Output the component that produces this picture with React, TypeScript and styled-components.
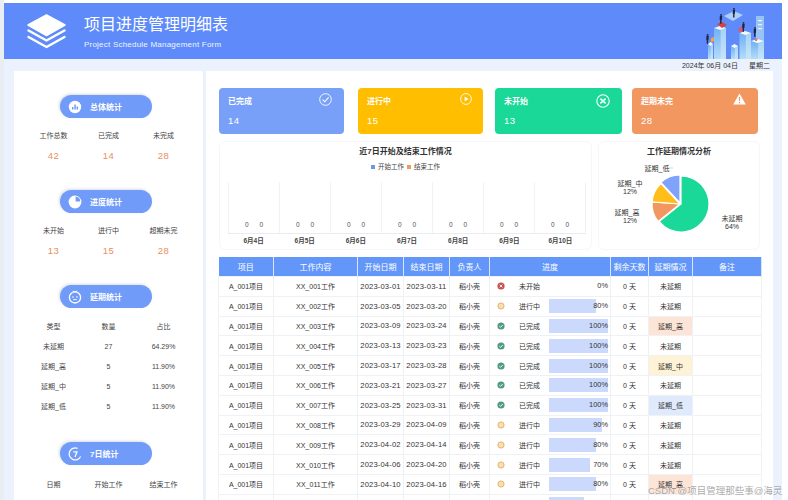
import styled, { createGlobalStyle } from 'styled-components';

// Types
type Task = {
  no: string;
  start: string;
  end: string;
  status: '未开始' | '进行中' | '已完成';
  progress: number;
  delay: string;
};

// Mock data
const tasks: Task[] = [
  { no: '001', start: '2023-03-01', end: '2023-03-11', status: '未开始', progress: 0, delay: '未延期' },
  { no: '002', start: '2023-03-05', end: '2023-03-20', status: '进行中', progress: 80, delay: '未延期' },
  { no: '003', start: '2023-03-09', end: '2023-03-24', status: '已完成', progress: 100, delay: '延期_高' },
  { no: '004', start: '2023-03-13', end: '2023-03-23', status: '已完成', progress: 100, delay: '未延期' },
  { no: '005', start: '2023-03-17', end: '2023-03-28', status: '已完成', progress: 100, delay: '延期_中' },
  { no: '006', start: '2023-03-21', end: '2023-03-27', status: '已完成', progress: 100, delay: '未延期' },
  { no: '007', start: '2023-03-25', end: '2023-03-31', status: '已完成', progress: 100, delay: '延期_低' },
  { no: '008', start: '2023-03-29', end: '2023-04-09', status: '进行中', progress: 90, delay: '未延期' },
  { no: '009', start: '2023-04-02', end: '2023-04-14', status: '进行中', progress: 80, delay: '未延期' },
  { no: '010', start: '2023-04-06', end: '2023-04-20', status: '进行中', progress: 70, delay: '未延期' },
  { no: '011', start: '2023-04-10', end: '2023-04-16', status: '进行中', progress: 80, delay: '延期_高' },
  { no: '012', start: '2023-04-14', end: '2023-04-22', status: '进行中', progress: 60, delay: '未延期' },
];

const columns: [string, number][] = [
  ['项目', 55],
  ['工作内容', 84],
  ['开始日期', 46],
  ['结束日期', 46],
  ['负责人', 40],
  ['进度', 121],
  ['剩余天数', 38],
  ['延期情况', 44],
  ['备注', 69],
];

const days = ['6月4日', '6月5日', '6月6日', '6月7日', '6月8日', '6月9日', '6月10日'];

const delayColors: Record<string, string> = {
  延期_高: '#fce4d6',
  延期_中: '#fff3d7',
  延期_低: '#e0eafd',
};

const GlobalStyle = createGlobalStyle`
  html, body {
    margin: 0;
    padding: 0;
    background: #ffffff;
    overflow: hidden;
    font-family: "Liberation Sans", "Noto Sans CJK SC", sans-serif;
  }
`;

const Page = styled.div`
  position: relative;
  width: 788px;
  height: 500px;
  overflow: hidden;
  box-sizing: border-box;
  padding: 3px 6px 0 4px;
  background: linear-gradient(to right, #e9edf4 4px, #ffffff 4px);
`;

const Sheet = styled.div`
  height: 497px;
  background: #ebf1fd;
`;

const Header = styled.header`
  height: 56px;
  background: #5e8bf9;
  display: flex;
  align-items: center;
  padding: 0 18px 0 23px;
  color: #fff;
`;

const HeaderText = styled.div`
  margin-left: 18px;
  flex: 1;
`;

const Title = styled.h1`
  margin: 1px 0 0;
  font-size: 16px;
  line-height: 22px;
  font-weight: 400;
`;

const Subtitle = styled.div`
  margin-top: 4px;
  font-size: 8px;
  line-height: 10px;
  letter-spacing: 0.22px;
  color: #eef3ff;
`;

const Illustration = styled.svg`
  align-self: flex-end;
`;

const DateBar = styled.div`
  height: 12px;
  display: flex;
  justify-content: flex-end;
  gap: 11px;
  padding-right: 12px;
  font-size: 7px;
  line-height: 13px;
  color: #333;
`;

const Main = styled.div`
  display: flex;
  gap: 3px;
  padding-left: 10px;
`;

const Sidebar = styled.aside`
  width: 189px;
  height: 429px;
  box-sizing: border-box;
  background: #fff;
  padding-top: 24px;
`;

const Section = styled.section<{ $after?: number }>`
  margin-bottom: ${p => p.$after ?? 25}px;
`;

const Pill = styled.div<{ $after?: number }>`
  width: 92px;
  height: 23px;
  margin: 0 0 ${p => p.$after ?? 7}px 46px;
  border-radius: 12px;
  background: #719bf8;
  box-shadow: -1px -1px 3px rgba(120, 130, 160, 0.28);
  display: flex;
  align-items: center;
  gap: 8px;
  padding-left: 8px;
  box-sizing: border-box;
  color: #fff;
  font-size: 8px;
  font-weight: 700;
`;

const StatRow = styled.div`
  display: grid;
  grid-template-columns: repeat(3, 55px);
  padding-left: 12px;
  height: 20px;
  align-items: center;
  text-align: center;
  font-size: 7px;
  color: #444;
`;

const StatValue = styled.span`
  color: #e8905c;
  font-size: 9.5px;
  letter-spacing: 0.4px;
`;

const Content = styled.main`
  width: 567px;
  height: 429px;
  box-sizing: border-box;
  background: #fff;
  padding: 17px 0 0 12px;
`;

const Cards = styled.div`
  display: flex;
  margin-left: 1px;
`;

const Card = styled.div<{ $bg: string; $width: number; $gap: number }>`
  position: relative;
  width: ${p => p.$width}px;
  margin-right: ${p => p.$gap}px;
  height: 46px;
  box-sizing: border-box;
  padding: 8px 9px;
  border-radius: 4px;
  background: ${p => p.$bg};
  color: #fff;
`;

const CardLabel = styled.div`
  font-size: 8px;
  line-height: 11px;
  font-weight: 700;
`;

const CardValue = styled.div`
  margin-top: 8px;
  font-size: 9.5px;
  line-height: 12px;
  letter-spacing: 0.5px;
`;

const CardIcon = styled.svg<{ $right: number; $top: number }>`
  position: absolute;
  right: ${p => p.$right}px;
  top: ${p => p.$top}px;
`;

const ChartRow = styled.div`
  display: flex;
  gap: 6px;
  margin: 7px 0 7px 1px;
`;

const ChartBox = styled.div<{ $width: number }>`
  width: ${p => p.$width}px;
  height: 109px;
  box-sizing: border-box;
  border: 1px solid #f6f7fb;
  border-radius: 6px;
  padding-top: 4px;
`;

const ChartTitle = styled.div`
  text-align: center;
  font-size: 8px;
  line-height: 11px;
  font-weight: 700;
  color: #333;
`;

const Legend = styled.div`
  margin-top: 5px;
  display: flex;
  justify-content: center;
  align-items: center;
  gap: 3px;
  font-size: 6.5px;
  line-height: 9px;
  color: #444;
`;

const LegendDot = styled.span<{ $color: string }>`
  display: block;
  flex: none;
  width: 4px;
  height: 4px;
  background: ${p => p.$color};
`;

const Plot = styled.div`
  display: flex;
  margin: 11px 0 0 8px;
  width: 358px;
  height: 52px;
  border-bottom: 1px solid #e9ebef;
  border-right: 1px solid #f1f2f5;
  box-sizing: border-box;
`;

const PlotGroup = styled.div`
  flex: 1;
  border-left: 1px solid #f1f2f5;
  display: flex;
  align-items: flex-end;
  justify-content: center;
  gap: 11px;
  padding-bottom: 4px;
  font-size: 6.5px;
  line-height: 8px;
  color: #555;
`;

const Days = styled.div`
  display: flex;
  margin-left: 8px;
  width: 358px;
`;

const DayLabel = styled.div`
  flex: 1;
  text-align: center;
  font-size: 6.5px;
  line-height: 14px;
  font-weight: 700;
  color: #444;
`;

const Table = styled.table`
  width: 543px;
  table-layout: fixed;
  border-collapse: collapse;
  font-size: 7px;
  color: #333;
`;

const Th = styled.th`
  height: 19px;
  padding: 0;
  background: #6396f9;
  border-right: 1px solid #d9e5fd;
  color: #fff;
  font-size: 8px;
  font-weight: 400;
  white-space: nowrap;
`;

const Td = styled.td<{ $bg?: string }>`
  height: 19.8px;
  padding: 0;
  box-sizing: border-box;
  text-align: center;
  white-space: nowrap;
  border: 1px solid #eff1f5;
  background: ${p => p.$bg ?? 'transparent'};
`;

const DateText = styled.span`
  font-size: 7.6px;
  letter-spacing: 0.15px;
`;

const Progress = styled.div`
  display: grid;
  grid-template-columns: 8px 21px 1fr;
  column-gap: 14px;
  align-items: center;
  padding: 0 2px 0 7px;
  text-align: left;
`;

const BarTrack = styled.div`
  position: relative;
  margin-left: -5px;
  height: 14px;
  font-size: 7.4px;
  line-height: 14px;
  text-align: right;
`;

const BarFill = styled.div`
  position: absolute;
  left: 0;
  top: 0;
  bottom: 0;
  background: #cbdafc;
`;

const BarText = styled.span`
  position: relative;
`;

const Watermark = styled.div`
  position: absolute;
  left: 648px;
  top: 484px;
  font-size: 9.5px;
  line-height: 13px;
  color: rgba(110, 110, 110, 0.6);
  text-shadow: 0 0 1px rgba(255, 255, 255, 0.8);
  white-space: nowrap;
`;

const LayersLogo = () => (
  <svg width="39" height="35" viewBox="0 0 39 35" fill="none">
    <path d="M19.5 1 L38 11 L19.5 21.5 L1 11 Z" fill="#fff" stroke="#fff" strokeWidth="1.5" strokeLinejoin="round" />
    <path d="M1.5 16.5 L19.5 26.5 L37.5 16.5" stroke="#fff" strokeWidth="2.4" strokeLinecap="round" strokeLinejoin="round" />
    <path d="M1.5 23 L19.5 33 L37.5 23" stroke="#fff" strokeWidth="2.4" strokeLinecap="round" strokeLinejoin="round" />
  </svg>
);

const Column = ({ x, y, w, h }: { x: number; y: number; w: number; h: number }) => (
  <g>
    <rect x={x} y={y} width={w} height={h} fill="url(#col)" />
    <rect x={x + w * 0.55} y={y} width={w * 0.45} height={h} fill="#d6ecfb" opacity="0.55" />
    <path d={`M${x} ${y} L${x + w / 2} ${y - 2} L${x + w} ${y} L${x + w / 2} ${y + 2} Z`} fill="#f2f9fe" />
  </g>
);

const Figure = ({ x, y }: { x: number; y: number }) => (
  <g>
    <circle cx={x} cy={y} r="1" fill="#2a2f4a" />
    <path d={`M${x - 1.2} ${y + 1.1} h2.4 l-0.3 4 h-0.4 v3.6 h-1.4 v-3.6 h-0.4 Z`} fill="#1c2647" />
  </g>
);

const BuildingArt = () => (
  <Illustration width="62" height="51" viewBox="0 0 62 51">
    <defs>
      <linearGradient id="col" x1="0" y1="0" x2="0" y2="1">
        <stop offset="0" stopColor="#6fb0f2" />
        <stop offset="1" stopColor="#b5dcf8" />
      </linearGradient>
    </defs>
    <path d="M22 8 L32 3 L41 7 L31 13 Z" fill="#c4dffa" opacity="0.8" />
    <rect x="54" y="8" width="8" height="29" fill="#a5cdf5" opacity="0.85" />
    <rect x="56" y="12" width="4" height="1.2" fill="#e4f2fd" />
    <rect x="56" y="16" width="4" height="1.2" fill="#e4f2fd" />
    <rect x="56" y="20" width="4" height="1.2" fill="#e4f2fd" />
    <Column x={12} y={20} w={12} h={31} />
    <Column x={29} y={38} w={7} h={13} />
    <Column x={37.5} y={25} w={11.5} h={26} />
    <Column x={49} y={33} w={13} h={18} />
    <Column x={6} y={36} w={5} h={15} />
    <path d="M15 16 L20 14 L25 17 L20 20 Z" fill="#dc3f3f" />
    <path d="M36 21 L41 18 L42 22 L38 25 Z" fill="#e0566a" />
    <path d="M9 30 L12 29 L12 33 L9 35 Z" fill="#f6a13b" />
    <path d="M53 31 L56 30 L55 33 L53 33 Z" fill="#ef7a4e" />
    <Figure x={32} y={0.9} />
    <Figure x={19} y={7} />
    <Figure x={41.5} y={15} />
    <Figure x={53} y={20} />
    <Figure x={5.6} y={27} />
  </Illustration>
);

const PillCircle = ({ children }: { children: React.ReactNode }) => (
  <svg width="14" height="14" viewBox="0 0 14 14">
    {children}
  </svg>
);

const statusIcon = (status: Task['status']) => {
  if (status === '未开始') {
    return (
      <svg width="8" height="8" viewBox="0 0 8 8">
        <circle cx="4" cy="4" r="3.6" fill="#c8504e" />
        <path d="M2.6 2.6 L5.4 5.4 M5.4 2.6 L2.6 5.4" stroke="#fff" strokeWidth="0.9" />
      </svg>
    );
  }
  if (status === '进行中') {
    return (
      <svg width="8" height="8" viewBox="0 0 8 8">
        <circle cx="4" cy="4" r="3.1" fill="#f6dfb4" stroke="#e8b36a" strokeWidth="1" />
      </svg>
    );
  }
  return (
    <svg width="8" height="8" viewBox="0 0 8 8">
      <circle cx="4" cy="4" r="3.6" fill="#4f9a82" />
      <path d="M2.3 4.1 L3.6 5.3 L5.8 2.9" stroke="#fff" strokeWidth="0.9" fill="none" />
    </svg>
  );
};

// Pie slice from angle a to b, degrees clockwise from the top
const slice = (cx: number, cy: number, r: number, a: number, b: number) => {
  const pt = (d: number) => {
    const t = (d * Math.PI) / 180;
    return `${(cx + r * Math.sin(t)).toFixed(2)} ${(cy - r * Math.cos(t)).toFixed(2)}`;
  };
  return `M${cx} ${cy} L${pt(a)} A${r} ${r} 0 ${b - a > 180 ? 1 : 0} 1 ${pt(b)} Z`;
};

const PieText = styled.text`
  font-size: 7px;
  fill: #333;
  text-anchor: middle;
`;

const PieSvg = styled.svg`
  display: block;
`;

const PieChart = () => (
  <PieSvg width="160" height="92" viewBox="0 0 160 92">
    <path d={slice(82, 47, 28, 0, 231.4)} fill="#19d898" stroke="#fff" strokeWidth="1.2" />
    <path d={slice(81, 47, 28, 231.4, 274.2)} fill="#f2975f" stroke="#fff" strokeWidth="1.2" />
    <path d={slice(81, 47, 28, 274.2, 317)} fill="#ffbe1a" stroke="#fff" strokeWidth="1.2" />
    <path d={slice(81, 46, 28, 317, 360)} fill="#7fa3fa" stroke="#fff" strokeWidth="1.2" />
    <path d="M69 11 L74 11" stroke="#aaa" strokeWidth="0.5" />
    <PieText x="58" y="14">延期_低</PieText>
    <PieText x="31" y="29">延期_中</PieText>
    <PieText x="31" y="37">12%</PieText>
    <PieText x="28" y="58">延期_高</PieText>
    <PieText x="31" y="66">12%</PieText>
    <PieText x="133" y="64">未延期</PieText>
    <PieText x="133" y="72">64%</PieText>
  </PieSvg>
);

const App = () => {
  return (
    <>
      <GlobalStyle />
      <Page>
        <Sheet>
          <Header>
            <LayersLogo />
            <HeaderText>
              <Title>项目进度管理明细表</Title>
              <Subtitle>Project Schedule Management Form</Subtitle>
            </HeaderText>
            <BuildingArt />
          </Header>
          <DateBar>
            <span>2024年 06月 04日</span>
            <span>星期二</span>
          </DateBar>
          <Main>
            <Sidebar>
              <Section>
                <Pill>
                  <PillCircle>
                    <circle cx="7" cy="7" r="6.2" fill="#fff" />
                    <path d="M4 9.5 V7 H5.5 V9.5 Z M6.3 9.5 V4.6 H7.8 V9.5 Z M8.6 9.5 V6.4 H10.1 V9.5 Z" fill="#719bf8" />
                  </PillCircle>
                  总体统计
                </Pill>
                <StatRow><span>工作总数</span><span>已完成</span><span>未完成</span></StatRow>
                <StatRow><StatValue>42</StatValue><StatValue>14</StatValue><StatValue>28</StatValue></StatRow>
              </Section>
              <Section>
                <Pill>
                  <PillCircle>
                    <circle cx="7" cy="7" r="6.4" fill="#fff" />
                    <path d="M7.6 1.6 A5 5 0 0 1 12.2 6.4 H7.6 Z" fill="#719bf8" />
                  </PillCircle>
                  进度统计
                </Pill>
                <StatRow><span>未开始</span><span>进行中</span><span>超期未完</span></StatRow>
                <StatRow><StatValue>13</StatValue><StatValue>15</StatValue><StatValue>28</StatValue></StatRow>
              </Section>
              <Section $after={26}>
                <Pill $after={8}>
                  <PillCircle>
                    <circle cx="7" cy="7.4" r="5.6" fill="none" stroke="#fff" strokeWidth="1.3" />
                    <path d="M4.8 1 L7 2.2 L9.2 1" fill="none" stroke="#fff" strokeWidth="1" />
                    <circle cx="5" cy="7" r="0.8" fill="#fff" />
                    <circle cx="9" cy="7" r="0.8" fill="#fff" />
                    <path d="M5.2 9.6 H8.8" stroke="#fff" strokeWidth="0.9" />
                  </PillCircle>
                  延期统计
                </Pill>
                <StatRow><span>类型</span><span>数量</span><span>占比</span></StatRow>
                <StatRow><span>未延期</span><span>27</span><span>64.29%</span></StatRow>
                <StatRow><span>延期_高</span><span>5</span><span>11.90%</span></StatRow>
                <StatRow><span>延期_中</span><span>5</span><span>11.90%</span></StatRow>
                <StatRow><span>延期_低</span><span>5</span><span>11.90%</span></StatRow>
              </Section>
              <Section>
                <Pill $after={9}>
                  <PillCircle>
                    <path d="M9.5 1.4 A6 6 0 1 0 12.6 9.6" fill="none" stroke="#fff" strokeWidth="1.2" />
                    <path d="M5.4 4.8 H9 L7 10" fill="none" stroke="#fff" strokeWidth="1.2" />
                  </PillCircle>
                  7日统计
                </Pill>
                <StatRow><span>日期</span><span>开始工作</span><span>结束工作</span></StatRow>
              </Section>
            </Sidebar>
            <Content>
              <Cards>
                <Card $bg="#78a0f9" $width={125} $gap={14}>
                  <CardLabel>已完成</CardLabel>
                  <CardValue>14</CardValue>
                  <CardIcon $right={12} $top={5} width="13" height="13" viewBox="0 0 13 13" fill="none">
                    <circle cx="6.5" cy="6.5" r="5.8" stroke="#fff" strokeWidth="0.9" />
                    <path d="M3.6 6.6 L5.8 8.8 L9.6 4.4" stroke="#fff" strokeWidth="1.1" />
                  </CardIcon>
                </Card>
                <Card $bg="#ffbe00" $width={125} $gap={12}>
                  <CardLabel>进行中</CardLabel>
                  <CardValue>15</CardValue>
                  <CardIcon $right={11} $top={5} width="12" height="12" viewBox="0 0 12 12" fill="none">
                    <circle cx="6" cy="6" r="5.4" stroke="#fff" strokeWidth="0.9" />
                    <path d="M4.6 3.4 L8.6 6 L4.6 8.6 Z" fill="#fff" />
                  </CardIcon>
                </Card>
                <Card $bg="#19d898" $width={127} $gap={10}>
                  <CardLabel>未开始</CardLabel>
                  <CardValue>13</CardValue>
                  <CardIcon $right={12} $top={6} width="14" height="14" viewBox="0 0 14 14" fill="none">
                    <circle cx="7" cy="7" r="6.2" stroke="#fff" strokeWidth="1.1" />
                    <path d="M4.4 4.6 L9.6 9.4 M9.6 4.6 L4.4 9.4" stroke="#fff" strokeWidth="1.5" />
                  </CardIcon>
                </Card>
                <Card $bg="#f2975f" $width={126} $gap={0}>
                  <CardLabel>超期未完</CardLabel>
                  <CardValue>28</CardValue>
                  <CardIcon $right={12} $top={5} width="13" height="12" viewBox="0 0 13 12">
                    <path d="M6.5 0.5 L12.8 11.5 H0.2 Z" fill="#fff" />
                    <path d="M6.5 4 V8 M6.5 9 V10.2" stroke="#f2975f" strokeWidth="1.2" />
                  </CardIcon>
                </Card>
              </Cards>
              <ChartRow>
                <ChartBox $width={373}>
                  <ChartTitle>近7日开始及结束工作情况</ChartTitle>
                  <Legend>
                    <LegendDot $color="#6f97e8" />
                    开始工作
                    <LegendDot $color="#eb9a68" />
                    结束工作
                  </Legend>
                  <Plot>
                    {days.map(day => (
                      <PlotGroup key={day}>
                        <span>0</span>
                        <span>0</span>
                      </PlotGroup>
                    ))}
                  </Plot>
                  <Days>
                    {days.map(day => (
                      <DayLabel key={day}>{day}</DayLabel>
                    ))}
                  </Days>
                </ChartBox>
                <ChartBox $width={162}>
                  <ChartTitle>工作延期情况分析</ChartTitle>
                  <PieChart />
                </ChartBox>
              </ChartRow>
              <Table>
                <colgroup>
                  {columns.map(([name, width]) => (
                    <col key={name} style={{ width }} />
                  ))}
                </colgroup>
                <thead>
                  <tr>
                    {columns.map(([name]) => (
                      <Th key={name}>{name}</Th>
                    ))}
                  </tr>
                </thead>
                <tbody>
                  {tasks.map(task => (
                    <tr key={task.no}>
                      <Td>A_001项目</Td>
                      <Td>XX_{task.no}工作</Td>
                      <Td><DateText>{task.start}</DateText></Td>
                      <Td><DateText>{task.end}</DateText></Td>
                      <Td>稻小壳</Td>
                      <Td>
                        <Progress>
                          {statusIcon(task.status)}
                          <span>{task.status}</span>
                          <BarTrack>
                            <BarFill style={{ width: `${task.progress}%` }} />
                            <BarText>{task.progress}%</BarText>
                          </BarTrack>
                        </Progress>
                      </Td>
                      <Td>0 天</Td>
                      <Td $bg={delayColors[task.delay]}>{task.delay}</Td>
                      <Td />
                    </tr>
                  ))}
                </tbody>
              </Table>
            </Content>
          </Main>
        </Sheet>
        <Watermark>CSDN @项目管理那些事@海灵</Watermark>
      </Page>
    </>
  );
};

export default App;
